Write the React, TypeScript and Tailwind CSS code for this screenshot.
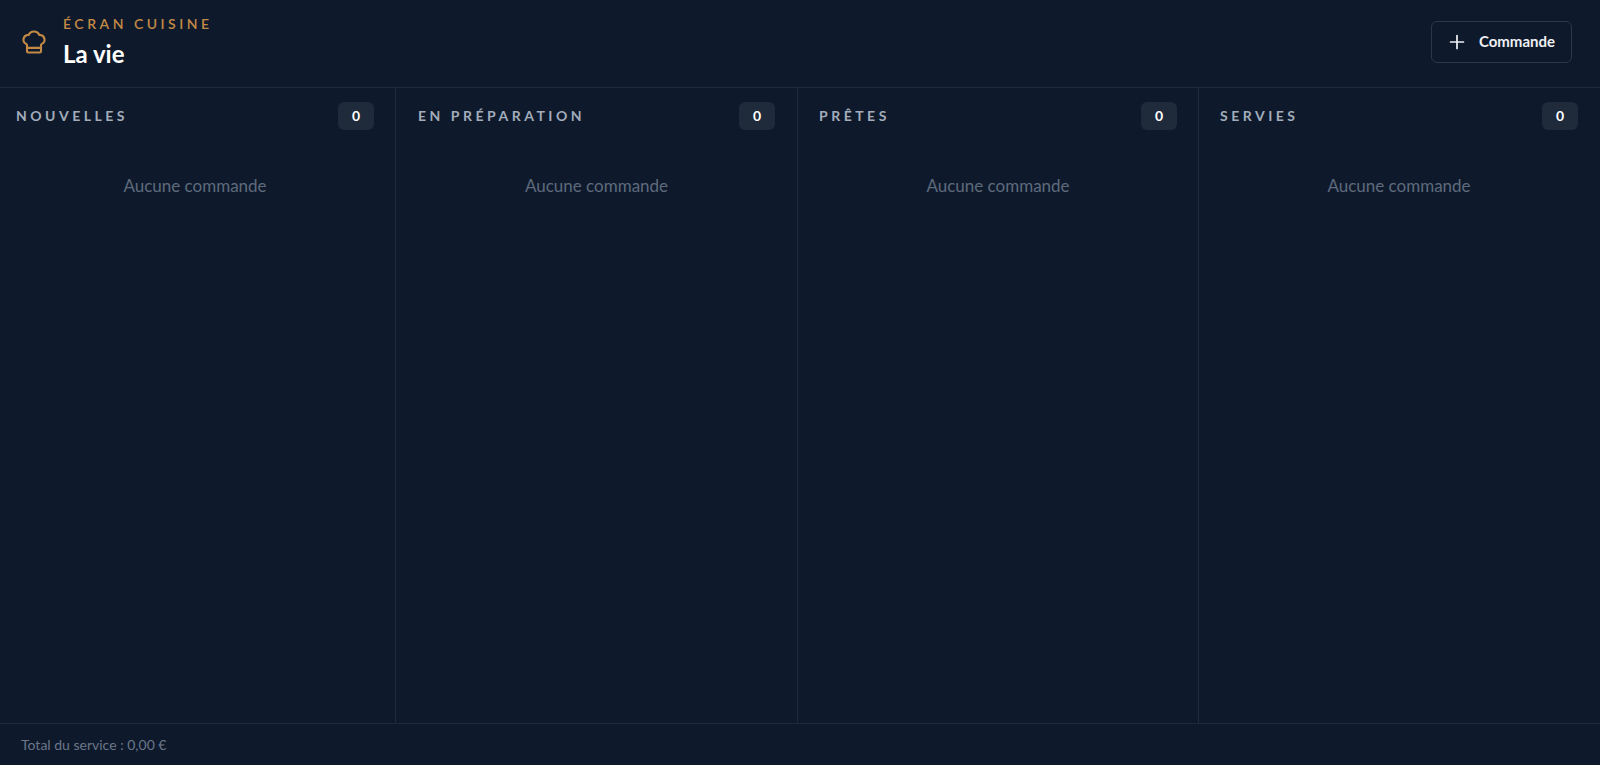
import { ChefHat, Plus } from "lucide-react";

interface Column {
  key: string;
  label: string;
  count: number;
}

const columns: Column[] = [
  { key: "new", label: "Nouvelles", count: 0 },
  { key: "prep", label: "En préparation", count: 0 },
  { key: "ready", label: "Prêtes", count: 0 },
  { key: "served", label: "Servies", count: 0 },
];

const colPad = [
  "pl-4 pr-[21px]",
  "pl-[22px] pr-[22px]",
  "pl-[21px] pr-[21px]",
  "pl-[21px] pr-[22px]",
];

export default function App() {
  return (
    <div
      className="flex flex-col h-screen bg-[#0e1a2c] text-white overflow-hidden"
      style={{ fontFamily: "Lato, 'Noto Sans', sans-serif" }}
    >
      {/* en-tête */}
      <header className="flex items-center justify-between h-[88px] shrink-0 pl-5 pr-7 pb-1 border-b border-[#1f2b3d]">
        <div className="flex items-center gap-[15px]">
          <ChefHat size={28} strokeWidth={1.8} className="text-[#c48a45]" />
          <div className="flex flex-col gap-1">
            <span className="text-sm leading-5 font-semibold tracking-[0.25em] text-[#c48a45] uppercase">
              Écran cuisine
            </span>
            <h1 className="text-2xl leading-8 font-bold text-white">La vie</h1>
          </div>
        </div>
        <button className="flex items-center gap-[11px] h-[42px] pl-3.5 pr-4 rounded-md border border-[#2c3849] bg-[#0e1a2c] text-[#eef0f3]">
          <Plus size={22} strokeWidth={1.9} />
          <span className="text-[15px] font-bold">Commande</span>
        </button>
      </header>

      {/* colonnes */}
      <main className="flex-1 grid grid-cols-[396px_402px_401px_1fr] min-h-0">
        {columns.map((col, i) => (
          <section
            key={col.key}
            className={`flex flex-col ${colPad[i]} ${i < 3 ? "border-r border-[#1f2b3d]" : ""}`}
          >
            <div className="flex items-center justify-between pt-[14px]">
              <h2 className="text-sm font-bold tracking-[0.25em] uppercase text-[#a2acba]">
                {col.label}
              </h2>
              <span className="min-w-9 h-7 px-3 rounded-md bg-[#1f2a3b] flex items-center justify-center text-sm font-bold text-white">
                {col.count}
              </span>
            </div>
            <div className="pt-3">
              <p className="py-8 text-center text-[17px] leading-6 text-[#5e6a7c]">
                Aucune commande
              </p>
            </div>
          </section>
        ))}
      </main>

      {/* pied */}
      <footer className="h-[42px] shrink-0 flex items-center px-[21px] border-t border-[#1f2b3d]">
        <span className="text-sm text-[#6b7689]">Total du service : 0,00 €</span>
      </footer>
    </div>
  );
}
